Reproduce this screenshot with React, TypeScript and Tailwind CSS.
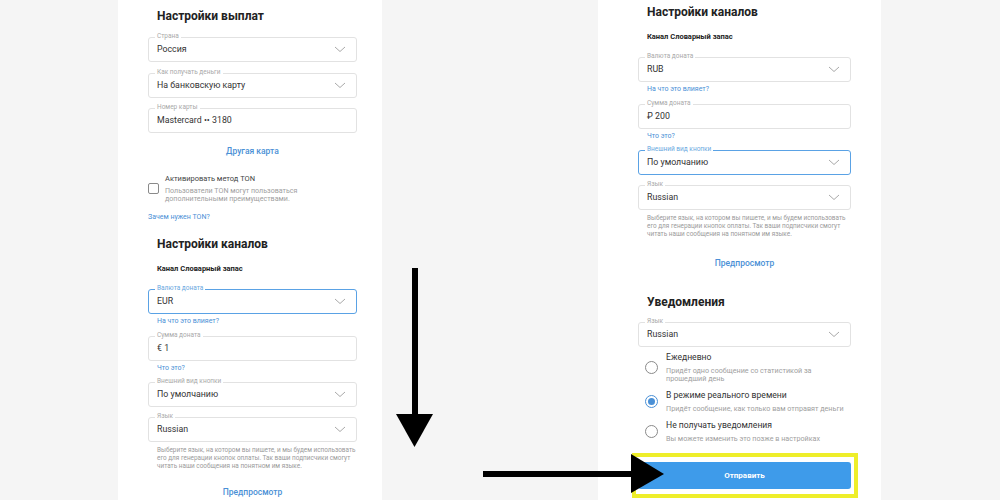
import clsx from 'clsx';

const font = { fontFamily: 'Roboto, "Noto Sans", sans-serif' };

const Chevron = () => (
  <svg width="12" height="7" viewBox="0 0 12 7" className="shrink-0">
    <path d="M1 1l5 4.5 5-4.5" fill="none" stroke="#a9a9a9" strokeWidth="1" />
  </svg>
);

const Field = ({
  label,
  value,
  select = true,
  focused = false,
  className = '',
}: {
  label: string;
  value: string;
  select?: boolean;
  focused?: boolean;
  className?: string;
}) => (
  <div
    className={clsx(
      'relative flex h-[25px] items-center rounded-[3px] pr-[4px] pl-[8px]',
      focused ? 'border-[1.5px] border-[#5aa2e5]' : 'border border-[#e2e2e2]',
      className,
    )}
  >
    <span
      className={clsx(
        'absolute -top-[6px] left-[6px] bg-white px-[2px] text-[6.5px] leading-[8px]',
        focused ? 'text-[#6aa8e0]' : 'text-[#a9a9a9]',
      )}
    >
      {label}
    </span>
    <span className="flex-1 text-[8.8px] text-[#333]">{value}</span>
    {select && (
      <span className="mr-[4px] flex w-[16px] justify-center">
        <Chevron />
      </span>
    )}
  </div>
);

const SmallLink = ({ children, className = '' }: { children: string; className?: string }) => (
  <div className={clsx('text-[7px] leading-[9px] text-[#4a90d6]', className)}>{children}</div>
);

const Heading = ({ children, className = '' }: { children: string; className?: string }) => (
  <h2 className={clsx('pl-[9px] text-[12px] leading-[16px] font-bold text-[#222]', className)}>{children}</h2>
);

const CenterLink = ({ children, className = '' }: { children: string; className?: string }) => (
  <div className={clsx('text-center text-[8.5px] leading-[12px] font-medium text-[#4a90d6]', className)}>
    {children}
  </div>
);

const ChannelSettings = ({ currency, amount, focusCurrency, focusLook }: {
  currency: string;
  amount: string;
  focusCurrency?: boolean;
  focusLook?: boolean;
}) => (
  <>
    <Heading>Настройки каналов</Heading>
    <div className="mt-[12px] pl-[9px] text-[7.5px] leading-[10px] font-bold text-[#222]">Канал Словарный запас</div>
    <Field className="mt-[15px]" label="Валюта доната" value={currency} focused={focusCurrency} />
    <SmallLink className="mt-[3px] pl-[9px]">На что это влияет?</SmallLink>
    <Field className="mt-[10px]" label="Сумма доната" value={amount} select={false} />
    <SmallLink className="mt-[3px] pl-[9px]">Что это?</SmallLink>
    <Field className="mt-[9px]" label="Внешний вид кнопки" value="По умолчанию" focused={focusLook} />
    <Field className="mt-[10px]" label="Язык" value="Russian" />
    <p className="mt-[4px] pl-[9px] text-[6.4px] leading-[8px] whitespace-nowrap text-[#9a9a9a]">
      Выберите язык, на котором вы пишете, и мы будем использовать
      <br />
      его для генерации кнопок оплаты. Так ваши подписчики смогут
      <br />
      читать наши сообщения на понятном им языке.
    </p>
  </>
);

const Radio = ({ title, sub, checked }: { title: string; sub: React.ReactNode; checked?: boolean }) => (
  <div className="flex items-center">
    <span
      className={clsx(
        'ml-[7px] flex h-[13px] w-[13px] shrink-0 items-center justify-center rounded-full border',
        checked ? 'border-[#4a90d6]' : 'border-[#8a8a8a]',
      )}
    >
      {checked && <span className="h-[7px] w-[7px] rounded-full bg-[#4a90d6]" />}
    </span>
    <div className="ml-[8px]">
      <div className="text-[8.6px] leading-[11px] text-[#333]">{title}</div>
      <div className="mt-[4px] text-[7.2px] leading-[8px] whitespace-nowrap text-[#a0a0a0]">{sub}</div>
    </div>
  </div>
);

const Arrows = () => (
  <svg className="pointer-events-none absolute top-0 left-0" width="1000" height="500">
    <rect x="412" y="268" width="6" height="148" fill="#000" />
    <polygon points="396,414 433,414 414.5,447" fill="#000" />
    <rect x="483" y="471" width="150" height="6" fill="#000" />
    <polygon points="631,454 631,493 664,474" fill="#000" />
  </svg>
);

export default function App() {
  return (
    <div className="relative flex h-[500px] w-[1000px] overflow-hidden bg-[#f5f5f5]" style={font}>
      <div className="ml-[118px] h-full w-[264px] bg-white pt-[8px] pl-[30px]">
        <div className="w-[209px]">
          <Heading>Настройки выплат</Heading>
          <Field className="mt-[13px]" label="Страна" value="Россия" />
          <Field className="mt-[11px]" label="Как получать деньги" value="На банковскую карту" />
          <Field className="mt-[10px]" label="Номер карты" value="Mastercard •• 3180" select={false} />
          <CenterLink className="mt-[12px]">Другая карта</CenterLink>
          <div className="mt-[17px] flex items-start">
            <span className="mt-[9px] h-[11px] w-[11px] shrink-0 rounded-[2px] border border-[#8a8a8a]" />
            <div className="ml-[6px]">
              <div className="text-[7.5px] leading-[10px] font-normal text-[#444]">Активировать метод TON</div>
              <div className="mt-[3px] text-[7.1px] leading-[8px] text-[#a0a0a0]">
                Пользователи TON могут пользоваться
                <br />
                дополнительными преимуществами.
              </div>
            </div>
          </div>
          <SmallLink className="mt-[10px]">Зачем нужен TON?</SmallLink>
          <div className="mt-[14px]">
            <ChannelSettings currency="EUR" amount="€ 1" focusCurrency />
          </div>
          <CenterLink className="mt-[16px]">Предпросмотр</CenterLink>
        </div>
      </div>

      <div className="ml-[216px] h-full w-[283px] bg-white pt-[4px] pl-[40px]">
        <div className="w-[213px]">
          <ChannelSettings currency="RUB" amount="₽ 200" focusLook />
          <CenterLink className="mt-[19px]">Предпросмотр</CenterLink>
          <Heading className="mt-[25px]">Уведомления</Heading>
          <Field className="mt-[12px]" label="Язык" value="Russian" />
          <div className="mt-[5px] flex flex-col gap-[7px]">
            <Radio
              title="Ежедневно"
              sub={
                <>
                  Придёт одно сообщение со статистикой за
                  <br />
                  прошедший день
                </>
              }
            />
            <Radio title="В режиме реального времени" sub="Придёт сообщение, как только вам отправят деньги" checked />
            <Radio title="Не получать уведомления" sub="Вы можете изменить это позже в настройках" />
          </div>
          <div className="relative mt-[19px]">
            <button className="flex h-[27px] w-full items-center justify-center rounded-[3px] bg-[#3e9bea] text-[8px] font-bold text-white">
              Отправить
            </button>
            <span className="pointer-events-none absolute -top-[9px] -right-[7px] -bottom-[9px] -left-[6px] border-[4px] border-[#eeee2a]" />
          </div>
        </div>
      </div>
      <Arrows />
    </div>
  );
}
